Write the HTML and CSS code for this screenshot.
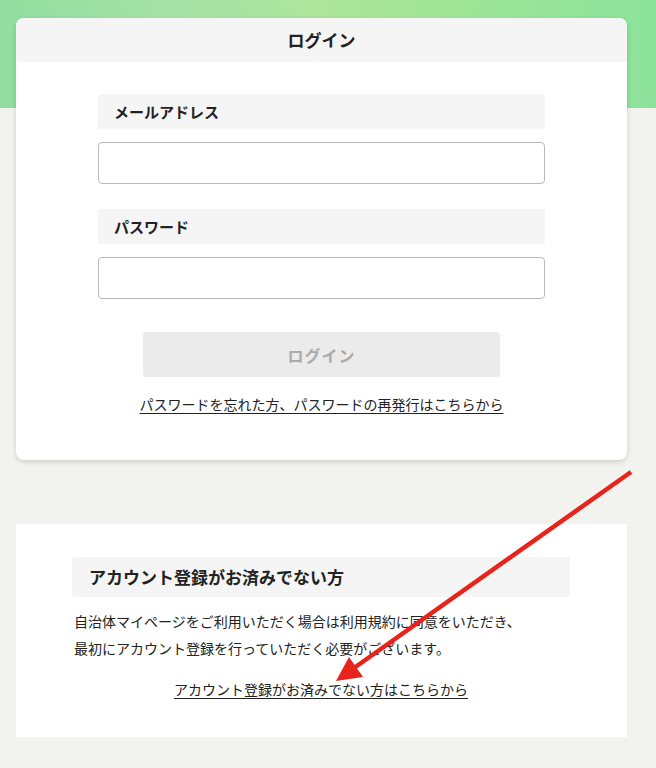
FILE: index.html
```html
<!DOCTYPE html>
<html lang="ja">
<head>
  <meta charset="UTF-8">
  <meta name="viewport" content="width=device-width, initial-scale=1.0">
  <title>ログイン</title>
  <link rel="stylesheet" href="styles.css">
</head>
<body>
  <main class="page">
    <!-- Login -->
    <section class="login-card">
      <h1 class="login-title">ログイン</h1>
      <div class="login-body">
        <div class="field">
          <label class="field-label" for="email">メールアドレス</label>
          <input class="field-input" type="email" id="email">
        </div>
        <div class="field">
          <label class="field-label" for="password">パスワード</label>
          <input class="field-input" type="password" id="password">
        </div>
        <button class="login-button" disabled>ログイン</button>
        <a class="text-link" href="#">パスワードを忘れた方、パスワードの再発行はこちらから</a>
      </div>
    </section>

    <!-- Register -->
    <section class="register-card">
      <h2 class="register-title">アカウント登録がお済みでない方</h2>
      <p class="register-text">自治体マイページをご利用いただく場合は利用規約に同意をいただき、<br>最初にアカウント登録を行っていただく必要がございます。</p>
      <div class="register-link">
        <a class="text-link" href="#">アカウント登録がお済みでない方はこちらから</a>
      </div>
    </section>
  </main>

  <svg class="arrow" width="656" height="768" viewBox="0 0 656 768">
    <line x1="631" y1="472" x2="354" y2="668" stroke="#e8231c" stroke-width="4.5"/>
    <polygon points="336,681 349,657 363,677" fill="#e8231c"/>
  </svg>
</body>
</html>
```

FILE: styles.css
```css
body {
  margin: 0;
  font-family: "Noto Sans CJK JP", "Noto Sans", sans-serif;
  color: #222;
  background: linear-gradient(to right, #92dd9f 0%, #a8e3a6 30%, #ade59a 50%, #a2e597 65%, #8ce29b 100%) no-repeat top left / 100% 108px, #f2f2ee;
}
.page {
  width: 611px;
  margin-left: 16px;
  padding-top: 18px;
  padding-bottom: 30px;
}
.login-card {
  background-color: #fff;
  border-radius: 8px;
  box-shadow: 0 2px 5px rgba(0, 0, 0, 0.15);
  overflow: hidden;
}
.login-title {
  margin: 0;
  height: 44px;
  line-height: 44px;
  background-color: #f5f5f5;
  text-align: center;
  font-size: 17px;
  font-weight: bold;
}
.login-body {
  padding: 32px 82px 46px;
  display: flex;
  flex-direction: column;
}
.field {
  display: flex;
  flex-direction: column;
  gap: 13px;
  margin-bottom: 25px;
}
.field-label {
  height: 35px;
  line-height: 35px;
  padding-left: 16px;
  background-color: #f5f5f5;
  border-radius: 3px;
  font-size: 15px;
  font-weight: bold;
}
.field-input {
  box-sizing: border-box;
  height: 42px;
  border: 1px solid #b9b9b9;
  border-radius: 4px;
  background-color: #fff;
}
.login-button {
  align-self: center;
  width: 357px;
  height: 45px;
  margin-top: 8px;
  border: none;
  border-radius: 4px;
  background-color: #ebebeb;
  color: #aaa;
  font-family: inherit;
  font-size: 16px;
  font-weight: bold;
  letter-spacing: 1px;
}
.text-link {
  color: #222;
  font-size: 14px;
  text-decoration: underline;
  text-underline-offset: 3px;
}
.login-body .text-link {
  align-self: center;
  margin-top: 17px;
}
.register-card {
  margin-top: 64px;
  background-color: #fff;
  padding: 33px 57px 37px 56px;
}
.register-title {
  margin: 0;
  height: 40px;
  line-height: 40px;
  padding-left: 17px;
  background-color: #f5f5f5;
  border-radius: 3px;
  font-size: 17px;
  font-weight: bold;
}
.register-text {
  margin: 11px 0 0 2px;
  font-size: 14px;
  line-height: 27px;
}
.register-link {
  margin-top: 14px;
  text-align: center;
}
.arrow {
  position: absolute;
  top: 0;
  left: 0;
  pointer-events: none;
}
```
